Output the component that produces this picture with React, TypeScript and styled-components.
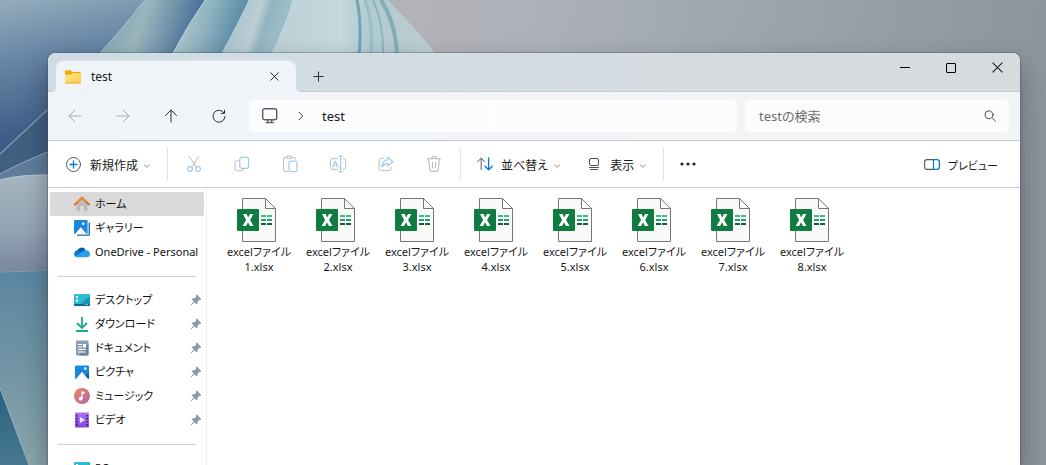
import React from "react";
import styled, { createGlobalStyle, css } from "styled-components";

const GlobalStyle = createGlobalStyle`
  *, *::before, *::after { box-sizing: border-box; }
  html, body { margin: 0; height: 100%; overflow: hidden; }
  body, button, input {
    font-family: "Noto Sans", "Noto Sans CJK JP", sans-serif;
    font-size: 12px;
    line-height: 16px;
    color: #191919;
    font-feature-settings: "palt";
  }
  #root { height: 100%; }
  button { margin: 0; padding: 0; border: 0; background: none; }
  ul { margin: 0; padding: 0; list-style: none; }
  svg { display: block; flex: none; }
`;

const Desktop = styled.div`
  position: relative;
  display: flex;
  height: 100%;
  overflow: hidden;
  padding: 53px 26px 0 48px;
  background: #8d949c;
`;

const WallpaperArt = styled.svg`
  position: absolute;
  inset: 0;
  width: 100%;
  height: 100%;
`;

const ExplorerWindow = styled.main`
  position: relative;
  flex: 1;
  min-width: 0;
  display: flex;
  flex-direction: column;
  overflow: hidden;
  border-radius: 8px 8px 0 0;
  background: #fff;
`;

const WindowShadow = styled.div`
  position: relative;
  flex: 1;
  min-width: 0;
  display: flex;
  border-radius: 8px 8px 0 0;
  box-shadow: 0 0 1px 1px rgba(70, 75, 80, 0.35), 0 12px 26px rgba(20, 28, 40, 0.4);
`;

const TitleBar = styled.header`
  display: flex;
  align-items: flex-start;
  height: 39px;
  padding-left: 8px;
  border-bottom: 1px solid #c4cad0;
  background: linear-gradient(90deg, #cfdce5 0%, #d1dde3 30%, #d4dbe3 56%, #d8dbde 66%, #d8dbde 100%);
`;

const tabFoot = css`
  content: "";
  position: absolute;
  bottom: 0;
  width: 4px;
  height: 4px;
`;

const Tab = styled.div`
  position: relative;
  display: flex;
  align-items: center;
  width: 240px;
  height: 31px;
  margin-top: 8px;
  padding: 0 14px 0 9px;
  border-radius: 8px 8px 0 0;
  background: #f0f4f8;
  box-shadow: 0 -1px 0 #e0e7ec;
  &::before {
    ${tabFoot}
    left: -4px;
    background: radial-gradient(circle at 0 0, transparent 3px, #c4cdd5 3px, #f0f4f8 4px);
  }
  &::after {
    ${tabFoot}
    right: -4px;
    background: radial-gradient(circle at 100% 0, transparent 3px, #c4cdd5 3px, #f0f4f8 4px);
  }
`;

const TabTitle = styled.span`
  flex: 1;
  margin-left: 10px;
`;

const TabButton = styled.button`
  display: grid;
  place-items: center;
  width: 16px;
  height: 30px;
`;

const NewTabButton = styled(TabButton)`
  width: 30px;
  margin: 8px 0 0 7px;
`;

const WindowControls = styled.div`
  display: flex;
  margin-left: auto;
`;

const WindowControl = styled.button`
  display: grid;
  place-items: center;
  width: 46px;
  height: 29px;
`;

const NavBar = styled.div`
  display: flex;
  align-items: center;
  height: 49px;
  padding: 0 11px 0 3px;
  border-bottom: 1px solid #c0c9d1;
  background: linear-gradient(90deg, #f0f4f8, #f2f4f7 60%, #f3f4f5);
`;

const NavButton = styled.button<{ $dim?: boolean }>`
  display: grid;
  place-items: center;
  width: 48px;
  height: 32px;
  color: ${(p) => (p.$dim ? "#a6aaae" : "#2c2f32")};
`;

const AddressBar = styled.nav`
  flex: 1;
  display: flex;
  align-items: center;
  height: 32px;
  margin: 0 8px 0 6px;
  padding-left: 12px;
  border-radius: 4px;
  background: linear-gradient(90deg, #fbfcfe, #fbfdfd);
`;

const Crumb = styled.button`
  display: grid;
  place-items: center;
  min-width: 18px;
  height: 32px;
  font-size: 13px;
`;

const CrumbArrow = styled.span`
  display: grid;
  place-items: center;
  width: 43px;
`;

const SearchBox = styled.label`
  display: flex;
  align-items: center;
  width: 264px;
  height: 32px;
  padding: 0 13px 0 14px;
  border-radius: 4px;
  background: #fbfdfd;
`;

const SearchInput = styled.input`
  flex: 1;
  min-width: 0;
  padding: 0;
  border: 0;
  outline: 0;
  background: none;
  font-size: 13px;
  line-height: 20px;
  &::placeholder { color: #6a6d70; opacity: 1; }
`;

const CommandBar = styled.div`
  display: flex;
  align-items: center;
  height: 47px;
  padding: 0 12px 0 8px;
  border-bottom: 1px solid #c0c9d1;
  background: #fff;
`;

const CommandButton = styled.button<{ $end?: boolean }>`
  display: flex;
  align-items: center;
  height: 32px;
  padding: 0 10px;
  margin-left: ${(p) => (p.$end ? "auto" : "0")};
  white-space: nowrap;
`;

const CommandLabel = styled.span<{ $small?: boolean }>`
  padding-top: 3px;
  margin-left: 8px;
  font-size: ${(p) => (p.$small ? "11px" : "12px")};
`;

const ChevronSlot = styled.span`
  padding-top: 3px;
  margin-left: 4px;
`;

const IconCommand = styled.button`
  display: grid;
  place-items: center;
  width: 48px;
  height: 32px;
`;

const CommandRule = styled.span<{ $before: number; $after: number }>`
  flex: none;
  width: 1px;
  height: 32px;
  margin: 0 ${(p) => p.$after}px 0 ${(p) => p.$before}px;
  background: #e4e4e4;
`;

const CommandGap = styled.span`
  width: 4px;
`;

const Body = styled.div`
  flex: 1;
  display: flex;
  min-height: 0;
`;

const Sidebar = styled.nav`
  flex: none;
  width: 159px;
  overflow: hidden;
  padding: 4px 2px 0;
  border-right: 1px solid #f0f0f0;
`;

const SideItem = styled.a<{ $selected?: boolean }>`
  display: flex;
  align-items: center;
  height: 24px;
  padding: 0 2px 0 24px;
  border-radius: 2px;
  background: ${(p) => (p.$selected ? "#d9d9d9" : "transparent")};
  color: #111;
  font-size: 11px;
  text-decoration: none;
  white-space: nowrap;
`;

const SideLabel = styled.span`
  flex: 1;
  margin-left: 5px;
`;

const SideRule = styled.hr`
  height: 1px;
  margin: 12px 8px 11px;
  border: 0;
  background: #d0d0d0;
`;

const FileGrid = styled.ul`
  flex: 1;
  display: flex;
  flex-wrap: wrap;
  align-content: flex-start;
  column-gap: 1px;
  padding: 10px 13px 0;
`;

const FileButton = styled.button`
  display: flex;
  flex-direction: column;
  align-items: center;
  width: 78px;
`;

const FileName = styled.span`
  margin-top: 2px;
  font-size: 11px;
  line-height: 15px;
  text-align: center;
  white-space: nowrap;
`;

const NameLine = styled.span`
  display: block;
`;

const Wallpaper = () => (
  <WallpaperArt viewBox="0 0 1046 465" preserveAspectRatio="xMinYMin slice" aria-hidden="true">
    <defs>
      <linearGradient id="grey" x1="400" y1="0" x2="1046" y2="120" gradientUnits="userSpaceOnUse">
        <stop offset="0" stopColor="#b3b3b7" />
        <stop offset="0.25" stopColor="#abb0b8" />
        <stop offset="0.6" stopColor="#9ba2a9" />
        <stop offset="1" stopColor="#8c949c" />
      </linearGradient>
      <linearGradient id="deep" x1="20" y1="0" x2="50" y2="150" gradientUnits="userSpaceOnUse">
        <stop offset="0" stopColor="#91a9bb" />
        <stop offset="0.4" stopColor="#6484a3" />
        <stop offset="1" stopColor="#34527f" />
      </linearGradient>
      <linearGradient id="p1" x1="118" y1="10" x2="190" y2="36" gradientUnits="userSpaceOnUse">
        <stop offset="0" stopColor="#86a9b4" />
        <stop offset="0.35" stopColor="#9ab4bb" />
        <stop offset="0.65" stopColor="#7698ae" />
        <stop offset="1" stopColor="#4b709a" />
      </linearGradient>
      <linearGradient id="p2" x1="188" y1="14" x2="238" y2="32" gradientUnits="userSpaceOnUse">
        <stop offset="0" stopColor="#a9c3cb" />
        <stop offset="0.4" stopColor="#8db1be" />
        <stop offset="1" stopColor="#5a8aa8" />
      </linearGradient>
      <linearGradient id="p3" x1="234" y1="18" x2="284" y2="34" gradientUnits="userSpaceOnUse">
        <stop offset="0" stopColor="#aac5cf" />
        <stop offset="0.42" stopColor="#bbced2" />
        <stop offset="0.6" stopColor="#93b5c1" />
        <stop offset="1" stopColor="#9dbfc8" />
      </linearGradient>
      <linearGradient id="p4" x1="280" y1="0" x2="430" y2="0" gradientUnits="userSpaceOnUse">
        <stop offset="0" stopColor="#bdd1d7" />
        <stop offset="0.4" stopColor="#c5d8dc" />
        <stop offset="0.6" stopColor="#b0cad1" />
        <stop offset="1" stopColor="#bdcdcf" />
      </linearGradient>
      <linearGradient id="bulb" x1="0" y1="175" x2="0" y2="272" gradientUnits="userSpaceOnUse">
        <stop offset="0" stopColor="#a5b6c1" />
        <stop offset="0.55" stopColor="#93a5b4" />
        <stop offset="1" stopColor="#7a87a0" />
      </linearGradient>
      <linearGradient id="lower" x1="10" y1="272" x2="30" y2="465" gradientUnits="userSpaceOnUse">
        <stop offset="0" stopColor="#5b86a1" />
        <stop offset="0.6" stopColor="#7798a6" />
        <stop offset="1" stopColor="#8aa5ab" />
      </linearGradient>
      <linearGradient id="wedge" x1="0" y1="388" x2="0" y2="465" gradientUnits="userSpaceOnUse">
        <stop offset="0" stopColor="#2b607f" />
        <stop offset="1" stopColor="#46788f" />
      </linearGradient>
    </defs>
    <rect width="1046" height="465" fill="url(#grey)" />
    <path d="M0 0H150L60 100V465H0Z" fill="url(#deep)" />
    <path d="M145 0Q125 26 100 53L60 95H190L210 0Z" fill="url(#p1)" />
    <path d="M205 0Q188 24 173 53L150 95H230L252 0Z" fill="url(#p2)" />
    <path d="M249 0Q238 24 222 53L200 95H270L294 0Z" fill="url(#p3)" />
    <path d="M293 0Q285 28 272 53L255 95H470L435 53Q415 28 388 0Z" fill="url(#p4)" />
    <g fill="none" stroke="#d0dfe3" strokeOpacity="0.6">
      <path d="M145 0Q125 26 100 53" />
      <path d="M205 0Q188 24 173 53" />
      <path d="M249 0Q238 24 222 53" />
      <path d="M293 0Q285 28 272 53" />
    </g>
    <g fill="none">
      <path d="M357 0Q362 24 359 56" stroke="#74a3b8" strokeWidth="3" />
      <path d="M365 0Q374 24 371 56" stroke="#9cbdc8" strokeWidth="3" />
      <path d="M373 0Q384 24 383 56" stroke="#8cb3c0" strokeWidth="2" />
      <path d="M381 0Q396 24 397 56" stroke="#83acba" strokeWidth="4" />
    </g>
    <path d="M0 154L60 98V150L0 174Z" fill="#405f80" />
    <path d="M0 154L60 98" stroke="#7f98ae" strokeWidth="1.5" />
    <path d="M0 174Q24 161 60 147V190H0Z" fill="#617c9b" />
    <path d="M0 174Q24 161 60 147" fill="none" stroke="#9aaebf" />
    <path d="M0 180Q20 174 60 175V275H0Z" fill="url(#bulb)" />
    <path d="M0 180Q20 174 60 175" fill="none" stroke="#b9c6ce" />
    <path d="M0 272Q30 272 60 269V465H0Z" fill="url(#lower)" />
    <path d="M0 272Q30 272 60 269" fill="none" stroke="#8799ad" />
    <path d="M0 388L29 465H0Z" fill="url(#wedge)" />
    <path d="M0 388L29 465" stroke="#9ab4bd" />
  </WallpaperArt>
);

const FolderIcon = () => (
  <svg width="16" height="14" viewBox="0 0 16 14">
    <defs>
      <linearGradient id="fold" x1="0" y1="0" x2="1" y2="1">
        <stop offset="0" stopColor="#ffe79b" />
        <stop offset="1" stopColor="#ffc93c" />
      </linearGradient>
    </defs>
    <path d="M0 1.3Q0 0.3 1 0.3H5.6L7.6 2H15Q16 2 16 3V12H0Z" fill="#f2ad0d" />
    <path d="M0 4.8H5.8L7.6 3.2H16V12.2Q16 13.2 15 13.2H1Q0 13.2 0 12.2Z" fill="url(#fold)" />
    <path d="M0.3 13h15.4" stroke="#e0a21b" strokeWidth="0.8" />
  </svg>
);

const CrossIcon = ({ size }: { size: number }) => (
  <svg width={size} height={size} viewBox="0 0 10 10">
    <path d="M0.5 0.5L9.5 9.5M9.5 0.5L0.5 9.5" stroke="#1b1b1b" strokeWidth="1" />
  </svg>
);

const ChevronIcon = () => (
  <svg width="10" height="10" viewBox="0 0 10 10">
    <path d="M2.2 3.6L5 6.3L7.8 3.6" fill="none" stroke="#8d8d8d" />
  </svg>
);

const stroke = { fill: "none", strokeLinecap: "round", strokeLinejoin: "round" } as const;
const GREY = "#bcbcbc";
const SKY = "#9fcdf0";

const ArrowIcon = ({ turn }: { turn: number }) => (
  <svg width="14" height="14" viewBox="0 0 14 14" {...stroke} stroke="currentColor">
    <path d="M1 7H13M6.5 1.5L1 7L6.5 12.5" transform={`rotate(${turn} 7 7)`} />
  </svg>
);

const RefreshIcon = () => (
  <svg width="14" height="14" viewBox="0 0 14 14" {...stroke} stroke="currentColor">
    <path d="M12.2 4.2A6 6 0 1 0 13 7.5M12.5 1.2V4.4H9.2" />
  </svg>
);

const MonitorIcon = () => (
  <svg width="18" height="16" viewBox="0 0 18 16" {...stroke} stroke="#5c5f62" strokeWidth="1.4">
    <rect x="1.7" y="0.8" width="14" height="11" rx="2" />
    <path d="M6.8 12V14.4M10.7 12V14.4M5 14.6H12.5" />
  </svg>
);

const CutIcon = () => (
  <svg width="16" height="18" viewBox="0 0 16 18" {...stroke}>
    <path d="M3.2 1.5L10.6 12.6M12.8 1.5L5.4 12.6" stroke={GREY} />
    <circle cx="4" cy="14" r="2.4" stroke={SKY} strokeWidth="1.2" />
    <circle cx="12" cy="14" r="2.4" stroke={SKY} strokeWidth="1.2" />
  </svg>
);

const CopyIcon = () => (
  <svg width="16" height="16" viewBox="0 0 16 16" {...stroke}>
    <path d="M4.2 4.6H3.2Q1 4.6 1 6.8V12.6Q1 14.8 3.2 14.8H7.2Q9.2 14.8 9.4 13" stroke={GREY} />
    <rect x="5.8" y="1.3" width="8.8" height="11" rx="2" stroke={SKY} strokeWidth="1.2" />
  </svg>
);

const PasteIcon = () => (
  <svg width="16" height="18" viewBox="0 0 16 18" {...stroke}>
    <path d="M5.8 16.4H3Q1.5 16.4 1.5 14.9V4Q1.5 2.4 3 2.4H4.4M10.2 2.4H11.6Q13.2 2.4 13.2 4V4.5" stroke={GREY} />
    <rect x="4.4" y="1.2" width="5.8" height="2.4" rx="1.1" stroke={GREY} />
    <rect x="7" y="6.2" width="8" height="10.4" rx="1.3" stroke={SKY} strokeWidth="1.2" />
  </svg>
);

const RenameIcon = () => (
  <svg width="18" height="18" viewBox="0 0 18 18" {...stroke}>
    <path d="M8.8 14.4H3.8Q1.4 14.4 1.4 12V6Q1.4 3.6 3.8 3.6H8.8M14.4 3.6Q16.6 3.8 16.6 6V12Q16.6 14.2 14.4 14.4" stroke={GREY} />
    <path d="M9.8 1.2H13.4M11.6 1.2V16.8M9.8 16.8H13.4" stroke={SKY} strokeWidth="1.2" />
    <path d="M3.8 12L6.3 6L8.8 12M4.7 10H7.9" stroke={SKY} strokeWidth="1.2" />
  </svg>
);

const ShareIcon = () => (
  <svg width="16" height="16" viewBox="0 0 16 16" {...stroke}>
    <path d="M5.6 2.2H3.4Q1.2 2.2 1.2 4.4V12.4Q1.2 14.6 3.4 14.6H11Q13.2 14.6 13.2 12.4V11.4" stroke={GREY} />
    <path d="M9.8 1.3L14.9 5.7L9.8 10V7.6Q6 7.4 4 10.6Q4.2 4.6 9.8 3.9Z" stroke={SKY} strokeWidth="1.2" />
  </svg>
);

const TrashIcon = () => (
  <svg width="16" height="18" viewBox="0 0 16 18" {...stroke} stroke={GREY} strokeWidth="1.1">
    <path d="M1.2 3.8H14.8M5.6 3.6Q5.8 1.3 8 1.3T10.4 3.6M2.6 4L3.8 14.6Q4 16.4 5.6 16.4H10.4Q12 16.4 12.2 14.6L13.4 4M6.5 7.4V12.8M9.5 7.4V12.8" />
  </svg>
);

const NewIcon = () => (
  <svg width="16" height="16" viewBox="0 0 16 16" {...stroke}>
    <circle cx="7.5" cy="8.5" r="7" stroke="#54575a" />
    <path d="M7.5 5V12M4 8.5H11" stroke="#0078d4" strokeWidth="1.3" />
  </svg>
);

const SortIcon = () => (
  <svg width="16" height="14" viewBox="0 0 16 14" {...stroke}>
    <path d="M4.2 12.5V1.2M0.7 4.7L4.2 1.2L7.5 4.7" stroke="#54575a" />
    <path d="M11.6 1V12.8M8 9.2L11.6 12.8L15.3 9.2" stroke="#0078d4" strokeWidth="1.3" />
  </svg>
);

const ViewIcon = () => (
  <svg width="16" height="14" viewBox="0 0 16 14" {...stroke} stroke="#4b4e51">
    <rect x="3.5" y="1.5" width="9" height="7" rx="1.5" />
    <path d="M3.5 10.5H12.5M4.5 12.5H11.5" />
  </svg>
);

const PreviewIcon = () => (
  <svg width="16" height="14" viewBox="0 0 16 14" {...stroke}>
    <path d="M9.5 2.6H3Q0.6 2.6 0.6 5V10Q0.6 12.4 3 12.4H9.5" stroke="#54575a" strokeWidth="1.1" />
    <path d="M9.5 2.6H13Q15.4 2.6 15.4 5V10Q15.4 12.4 13 12.4H9.5Z" stroke="#0078d4" strokeWidth="1.2" />
  </svg>
);

const PinIcon = () => (
  <svg width="12" height="12" viewBox="0 0 12 12">
    <path d="M6.8 0.6L11.4 5.2L10.4 6L9.6 5.8L7.6 7.8Q7.9 9.3 6.8 10.4L4.6 8.2L1.4 11.2L0.8 10.6L3.8 7.4L1.6 5.2Q2.7 4.1 4.2 4.4L6.2 2.4L6 1.6Z" fill="#8c98a2" />
  </svg>
);

type SideKind = "home" | "gallery" | "cloud" | "desktop" | "download" | "document" | "picture" | "music" | "video";

const sideArt: Record<SideKind, React.ReactNode> = {
  home: (
    <>
      <path d="M2.5 7L8 2L13.5 7V14.5Q13.5 15.3 12.7 15.3H10V10H6V15.3H3.3Q2.5 15.3 2.5 14.5Z" fill="#bcbdbf" />
      <path d="M0.9 8.6L8 1.8L15.1 8.6" fill="none" stroke="#e2661a" strokeWidth="1.9" strokeLinecap="round" strokeLinejoin="round" />
      <path d="M3.5 6.1L8 1.8L12 5.6" fill="none" stroke="#f08a24" strokeWidth="1.9" strokeLinejoin="round" />
    </>
  ),
  gallery: (
    <>
      <path d="M3 15.8H14.6Q16 15.8 16 14.4V2.4H14.6V14.6H3Z" fill="#1572bd" />
      <rect width="13.6" height="14" rx="1.2" fill="#1b88da" />
      <path d="M1 14L6.8 7.2L12.6 14Z" fill="#fff" />
      <circle cx="9.2" cy="3.8" r="1.3" fill="#fff" />
    </>
  ),
  cloud: (
    <>
      <path d="M3 7.5A4.6 4.6 0 0 1 11.6 6L9 11L3 10Z" fill="#0a5cb8" />
      <path d="M0.2 9.8A3.3 3.3 0 0 1 4.6 6.5L11 9.5L6 13H3.2A3.2 3.2 0 0 1 0.2 9.8Z" fill="#1272ce" />
      <path d="M3 13.2Q1.5 13.2 0.9 12.2L10.2 6.6A3.6 3.6 0 0 1 12.4 6.2Q16 7 16 10Q15.8 13.2 12.6 13.2Z" fill="#28a0e8" />
    </>
  ),
  desktop: (
    <>
      <rect y="2" width="16" height="12" rx="1" fill="#2ebad0" />
      <path d="M16 4V13Q16 14 15 14H4Z" fill="#1595b8" />
      <path d="M0 12H16V13Q16 14 15 14H1Q0 14 0 13Z" fill="#14658f" />
      <path d="M2 4H4V6H2ZM2 7.5H4V9.5H2ZM11 12.3H12V13H11ZM13 12.3H14V13H13Z" fill="#fff" />
    </>
  ),
  download: <path d="M8 1V11.5M3 7L8 12L13 7M2 15H14" fill="none" stroke="#1cab89" strokeWidth="1.8" />,
  document: (
    <>
      <rect x="2" y="0.5" width="12.5" height="15" rx="1" fill="#8ba0b6" />
      <path d="M14.5 4V14.5Q14.5 15.5 13.5 15.5H5Z" fill="#6c839e" />
      <path d="M4 4.5H8M4 7H8M4 9.5H12M4 12H12" stroke="#fff" />
      <rect x="9" y="4" width="3" height="3.5" fill="#fff" />
    </>
  ),
  picture: (
    <>
      <rect x="1" y="1.5" width="14" height="13.5" rx="1" fill="#1b88da" />
      <path d="M15 8V14L14 15H8Z" fill="#0f62b0" />
      <path d="M2 15L8 7.8L14 15Z" fill="#fff" />
      <circle cx="11.3" cy="4.6" r="1.3" fill="#fff" />
    </>
  ),
  music: (
    <>
      <circle cx="8" cy="8" r="8" fill="url(#musicFill)" />
      <circle cx="6.7" cy="10.7" r="1.9" fill="#fff" />
      <path d="M7.4 3.2L10.8 4V6L8.6 5.5V10.7H7.4Z" fill="#fff" />
    </>
  ),
  video: (
    <>
      <rect x="1" y="0.5" width="14" height="15" rx="1" fill="url(#videoFill)" />
      <path d="M5.8 4.8L11 8L5.8 11.2Z" fill="#f0e4ff" />
      <path d="M2 3H3.5V4.5H2ZM2 6H3.5V7.5H2ZM2 9H3.5V10.5H2ZM2 12H3.5V13.5H2ZM12.5 3H14V4.5H12.5ZM12.5 6H14V7.5H12.5ZM12.5 9H14V10.5H12.5ZM12.5 12H14V13.5H12.5Z" fill="#3b1d73" />
    </>
  ),
};

const SideIcon = ({ kind }: { kind: SideKind }) => (
  <svg width="16" height="16" viewBox="0 0 16 16" aria-hidden="true">
    <defs>
      <linearGradient id="musicFill" x1="0" y1="0" x2="1" y2="1">
        <stop offset="0" stopColor="#ee8a5c" />
        <stop offset="1" stopColor="#ab64a8" />
      </linearGradient>
      <linearGradient id="videoFill" x1="0" y1="0" x2="0" y2="1">
        <stop offset="0" stopColor="#a873ee" />
        <stop offset="1" stopColor="#8243de" />
      </linearGradient>
    </defs>
    {sideArt[kind]}
  </svg>
);

const ExcelIcon = () => (
  <svg width="44" height="44" viewBox="0 0 44 44" aria-hidden="true">
    <path d="M5.5 0.5H28.5L38.5 10.5V43.5H5.5Z" fill="#f9f9f9" stroke="#777" />
    <path d="M28.5 0.5V10.5H38.5Z" fill="#fff" stroke="#777" strokeLinejoin="round" />
    <rect y="11" width="22" height="22" rx="1" fill="#107c41" />
    <path d="M6 16H9.6L11.2 19.6L13 16H16.4L13.1 22L16.5 28H12.9L11 24.2L9.1 28H5.6L9.1 22Z" fill="#fff" />
    <path d="M24 18H29M30 18H35" stroke="#33c481" strokeWidth="2" />
    <path d="M24 22H29M30 22H35" stroke="#21a366" strokeWidth="2" />
    <path d="M24 26H29M30 26H35" stroke="#185c37" strokeWidth="2" />
  </svg>
);

const topItems: { kind: SideKind; label: string; selected?: boolean }[] = [
  { kind: "home", label: "ホーム", selected: true },
  { kind: "gallery", label: "ギャラリー" },
  { kind: "cloud", label: "OneDrive - Personal" },
];

const pinnedItems: { kind: SideKind; label: string }[] = [
  { kind: "desktop", label: "デスクトップ" },
  { kind: "download", label: "ダウンロード" },
  { kind: "document", label: "ドキュメント" },
  { kind: "picture", label: "ピクチャ" },
  { kind: "music", label: "ミュージック" },
  { kind: "video", label: "ビデオ" },
];

const editCommands = [
  { label: "切り取り", icon: <CutIcon /> },
  { label: "コピー", icon: <CopyIcon /> },
  { label: "貼り付け", icon: <PasteIcon /> },
  { label: "名前の変更", icon: <RenameIcon /> },
  { label: "共有", icon: <ShareIcon /> },
  { label: "削除", icon: <TrashIcon /> },
];

const files = [1, 2, 3, 4, 5, 6, 7, 8];

const MenuCommand = ({ icon, label }: { icon: React.ReactNode; label: string }) => (
  <CommandButton>
    {icon}
    <CommandLabel>{label}</CommandLabel>
    <ChevronSlot><ChevronIcon /></ChevronSlot>
  </CommandButton>
);

export default function App() {
  return (
    <Desktop>
      <GlobalStyle />
      <Wallpaper />
      <WindowShadow>
        <ExplorerWindow>
          <TitleBar>
            <Tab>
              <FolderIcon />
              <TabTitle>test</TabTitle>
              <TabButton aria-label="タブを閉じる"><CrossIcon size={9} /></TabButton>
            </Tab>
            <NewTabButton aria-label="新しいタブ">
              <svg width="11" height="11" viewBox="0 0 11 11">
                <path d="M5.5 0.5V10.5M0.5 5.5H10.5" stroke="#2a2a2a" />
              </svg>
            </NewTabButton>
            <WindowControls>
              <WindowControl aria-label="最小化">
                <svg width="10" height="10" viewBox="0 0 10 10"><path d="M0 4.5H10" stroke="#000" /></svg>
              </WindowControl>
              <WindowControl aria-label="最大化">
                <svg width="10" height="10" viewBox="0 0 10 10">
                  <rect x="0.5" y="0.5" width="9" height="9" rx="0.5" fill="none" stroke="#000" />
                </svg>
              </WindowControl>
              <WindowControl aria-label="閉じる"><CrossIcon size={11} /></WindowControl>
            </WindowControls>
          </TitleBar>

          <NavBar>
            <NavButton $dim aria-label="戻る"><ArrowIcon turn={0} /></NavButton>
            <NavButton $dim aria-label="進む"><ArrowIcon turn={180} /></NavButton>
            <NavButton aria-label="上へ"><ArrowIcon turn={90} /></NavButton>
            <NavButton aria-label="最新の情報に更新"><RefreshIcon /></NavButton>
            <AddressBar aria-label="アドレス">
              <Crumb aria-label="PC"><MonitorIcon /></Crumb>
              <CrumbArrow>
                <svg width="8" height="10" viewBox="0 0 8 10" {...stroke} stroke="#303336">
                  <path d="M2 1.2L5.8 5L2 8.8" />
                </svg>
              </CrumbArrow>
              <Crumb>test</Crumb>
            </AddressBar>
            <SearchBox>
              <SearchInput type="text" placeholder="testの検索" aria-label="testの検索" />
              <svg width="12" height="12" viewBox="0 0 12 12" {...stroke} stroke="#4a4d50">
                <circle cx="5" cy="4.8" r="4" />
                <path d="M8 7.8L11.3 11" />
              </svg>
            </SearchBox>
          </NavBar>

          <CommandBar>
            <MenuCommand icon={<NewIcon />} label="新規作成" />
            <CommandRule $before={5} $after={2} />
            {editCommands.map((c) => (
              <IconCommand key={c.label} aria-label={c.label} disabled>{c.icon}</IconCommand>
            ))}
            <CommandRule $before={2} $after={6} />
            <MenuCommand icon={<SortIcon />} label="並べ替え" />
            <CommandGap />
            <MenuCommand icon={<ViewIcon />} label="表示" />
            <CommandRule $before={5} $after={0} />
            <IconCommand aria-label="もっと見る">
              <svg width="16" height="4" viewBox="0 0 16 4" fill="#222">
                <circle cx="2" cy="2" r="1.6" />
                <circle cx="8" cy="2" r="1.6" />
                <circle cx="14" cy="2" r="1.6" />
              </svg>
            </IconCommand>
            <CommandButton $end>
              <PreviewIcon />
              <CommandLabel $small>プレビュー</CommandLabel>
            </CommandButton>
          </CommandBar>

          <Body>
            <Sidebar aria-label="ナビゲーション">
              {topItems.map((item) => (
                <SideItem key={item.label} href="#" $selected={item.selected}>
                  <SideIcon kind={item.kind} />
                  <SideLabel>{item.label}</SideLabel>
                </SideItem>
              ))}
              <SideRule />
              {pinnedItems.map((item) => (
                <SideItem key={item.label} href="#">
                  <SideIcon kind={item.kind} />
                  <SideLabel>{item.label}</SideLabel>
                  <PinIcon />
                </SideItem>
              ))}
              <SideRule />
              <SideItem href="#">
                <SideIcon kind="desktop" />
                <SideLabel>PC</SideLabel>
              </SideItem>
            </Sidebar>
            <FileGrid>
              {files.map((n) => (
                <li key={n}>
                  <FileButton>
                    <ExcelIcon />
                    <FileName>
                      <NameLine>excelファイル</NameLine>
                      <NameLine>{n}.xlsx</NameLine>
                    </FileName>
                  </FileButton>
                </li>
              ))}
            </FileGrid>
          </Body>
        </ExplorerWindow>
      </WindowShadow>
    </Desktop>
  );
}
